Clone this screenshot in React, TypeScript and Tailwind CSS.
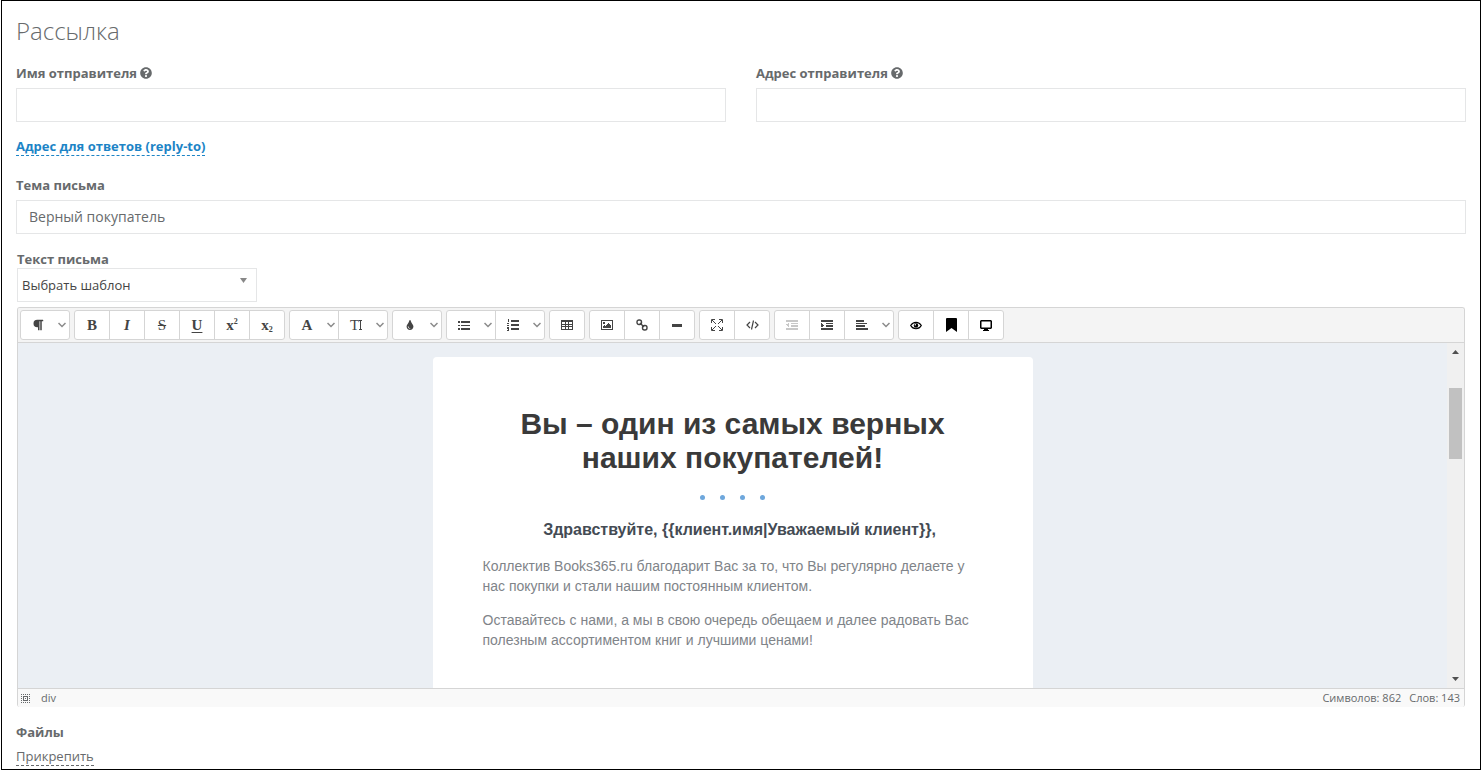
import type { ReactNode } from "react";
import { FaQuestionCircle, FaParagraph, FaTint } from "react-icons/fa";

type Tool = { label: string; icon: ReactNode; menu?: boolean; muted?: boolean };

function Icon({ w = 12, h = 12, children }: { w?: number; h?: number; children: ReactNode }) {
  return (
    <svg width={w} height={h} viewBox={`0 0 ${w} ${h}`} fill="currentColor" shapeRendering="crispEdges">
      {children}
    </svg>
  );
}

const glyph = "font-['Liberation_Serif',serif] text-[15px] leading-4";

const groups: Tool[][] = [
  [{ label: "Формат", icon: <FaParagraph size={12} />, menu: true }],
  [
    { label: "Полужирный", icon: <span className={`${glyph} font-bold`}>B</span> },
    { label: "Курсив", icon: <span className={`${glyph} font-bold italic`}>I</span> },
    { label: "Зачёркнутый", icon: <span className={`${glyph} line-through`}>S</span> },
    { label: "Подчёркнутый", icon: <span className={`${glyph} font-bold underline underline-offset-2`}>U</span> },
    {
      label: "Надстрочный",
      icon: (
        <span className={`${glyph} flex items-start font-bold`}>
          x<span className="text-[8px] leading-[10px]">2</span>
        </span>
      ),
    },
    {
      label: "Подстрочный",
      icon: (
        <span className={`${glyph} flex items-end font-bold`}>
          x<span className="text-[8px] leading-[6px]">2</span>
        </span>
      ),
    },
  ],
  [
    { label: "Шрифт", icon: <span className={`${glyph} font-bold`}>A</span>, menu: true },
    {
      label: "Размер шрифта",
      icon: (
        <span className="flex items-center">
          <span className={glyph}>T</span>
          <Icon w={3} h={10}>
            <path d="M1 0h1v10H1zM0 0h3v1H0zM0 9h3v1H0z" />
          </Icon>
        </span>
      ),
      menu: true,
    },
  ],
  [{ label: "Цвет", icon: <FaTint size={10} />, menu: true }],
  [
    {
      label: "Маркированный список",
      icon: (
        <Icon w={12} h={9}>
          <path d="M0 0h2v2H0zM0 4h2v1H0zM0 7h2v2H0zM3 0h9v2H3zM3 4h9v1H3zM3 7h9v2H3z" />
        </Icon>
      ),
      menu: true,
    },
    {
      label: "Нумерованный список",
      icon: (
        <Icon w={12} h={12}>
          <path d="M1 0h1v3H1zM0 4h2v1H1v1h1v1H0V6h1V5H0zM0 8h2v4H0v-1h1v-1H0zM4 1h8v2H4zM4 5h8v2H4zM4 9h8v2H4z" />
        </Icon>
      ),
      menu: true,
    },
  ],
  [
    {
      label: "Таблица",
      icon: (
        <Icon w={12} h={10}>
          <path fillRule="evenodd" d="M0 0h12v10H0zM1 2v2h3V2zM5 2v2h2V2zM8 2v2h3V2zM1 5v1h3V5zM5 5v1h2V5zM8 5v1h3V5zM1 7v2h3V7zM5 7v2h2V7zM8 7v2h3V7z" />
        </Icon>
      ),
    },
  ],
  [
    {
      label: "Изображение",
      icon: (
        <Icon w={12} h={10}>
          <path fillRule="evenodd" d="M0 0h12v10H0zM1 1v8h10V1z" />
          <path d="M2 2h2v2H2zM2 8V6h1V5h1v1h1V5h1V4h1V3h1v1h1v1h1v3z" />
        </Icon>
      ),
    },
    {
      label: "Ссылка",
      icon: (
        <svg width="12" height="12" viewBox="0 0 12 12" fill="none" stroke="currentColor" strokeWidth="1.4">
          <rect x="1" y="1" width="4.500" height="4.500" rx="2" />
          <rect x="6.500" y="6.500" width="4.500" height="4.500" rx="2" />
          <path d="M4 4l4 4" />
        </svg>
      ),
    },
    {
      label: "Линия",
      icon: (
        <Icon w={10} h={3}>
          <path d="M0 0h10v3H0z" />
        </Icon>
      ),
    },
  ],
  [
    {
      label: "На весь экран",
      icon: (
        <svg width="12" height="12" viewBox="0 0 12 12" fill="none" stroke="currentColor" strokeWidth="1">
          <path d="M.5 4V.5H4M8 .5h3.500V4M11.500 8v3.500H8M4 11.500H.5V8M1 1l4 4M11 1L7 5M11 11L7 7M1 11l4-4" />
        </svg>
      ),
    },
    {
      label: "HTML",
      icon: (
        <svg width="13" height="10" viewBox="0 0 13 10" fill="none" stroke="currentColor" strokeWidth="1.2">
          <path d="M4 2L1 5l3 3M9 2l3 3-3 3M7.500.5l-2 9" />
        </svg>
      ),
    },
  ],
  [
    {
      label: "Уменьшить отступ",
      icon: (
        <Icon w={12} h={10}>
          <path d="M0 0h12v2H0zM5 3h7v1H5zM5 5h7v2H5zM0 8h12v2H0zM3 3v4H2V6H1V5H0V4h2V3z" />
        </Icon>
      ),
      muted: true,
    },
    {
      label: "Увеличить отступ",
      icon: (
        <Icon w={12} h={10}>
          <path d="M0 0h12v2H0zM5 3h7v1H5zM5 5h7v2H5zM0 8h12v2H0zM0 3h1v1h1v1h1v1H2v1H0z" />
        </Icon>
      ),
    },
    {
      label: "Выравнивание",
      icon: (
        <Icon w={12} h={10}>
          <path d="M0 0h8v2H0zM0 3h11v1H0zM0 5h9v2H0zM0 8h12v2H0z" />
        </Icon>
      ),
      menu: true,
    },
  ],
  [
    {
      label: "Просмотр",
      icon: (
        <svg className="text-black" width="12" height="9" viewBox="0 0 12 9" fill="none" stroke="currentColor" strokeWidth="1.2">
          <path d="M.7 4.500C3 .2 9 .2 11.300 4.500 9 8.800 3 8.800.7 4.500z" />
          <circle cx="6" cy="4.500" r="2.200" fill="currentColor" stroke="none" />
          <circle cx="5.300" cy="3.700" r=".8" fill="#fff" stroke="none" />
        </svg>
      ),
    },
    {
      label: "Закладка",
      icon: (
        <svg className="text-black" width="11" height="14" viewBox="0 0 11 14" fill="currentColor">
          <path d="M1 0h9a1 1 0 0 1 1 1v13l-5.500-4L0 14V1a1 1 0 0 1 1-1z" />
        </svg>
      ),
    },
    {
      label: "Экран",
      icon: (
        <svg className="text-black" width="12" height="11" viewBox="0 0 12 11" fill="currentColor">
          <path fillRule="evenodd" d="M1 0h10l1 1v7l-1 1H8v1h1v1H3v-1h1V9H1L0 8V1zM1.500 1.500v6h9v-6z" />
        </svg>
      ),
    },
  ],
];

function ToolButton({ tool }: { tool: Tool }) {
  return (
    <button type="button" aria-label={tool.label} className="flex h-7 items-center hover:bg-gray-50">
      <span className={`flex w-[34px] justify-center ${tool.muted ? "text-[#c8c8c8]" : "text-[#444]"}`}>
        {tool.icon}
      </span>
      {tool.menu && (
        <svg className="mx-[3px] text-[#8a8a8a]" width="8" height="6" viewBox="0 0 8 6" fill="none" stroke="currentColor" strokeWidth="1.5">
          <path d="M.5 1L4 4.500 7.500 1" />
        </svg>
      )}
    </button>
  );
}

function Field({ id, label, help, value }: { id: string; label: string; help?: boolean; value?: string }) {
  return (
    <div>
      <label htmlFor={id} className="flex items-center gap-[3px] text-[13px] font-bold leading-5">
        {label}
        {help && <FaQuestionCircle size={12} />}
      </label>
      <input
        id={id}
        type="text"
        defaultValue={value}
        className="mt-[5px] block h-[34px] w-full border border-[#e5e6e7] bg-white px-3 pb-0.5 text-sm outline-none"
      />
    </div>
  );
}

function Scrollbar() {
  return (
    <div className="flex w-[17px] shrink-0 flex-col items-center bg-[#f0f0f0] text-[#505050]">
      <svg className="mt-[7px]" width="7" height="4" viewBox="0 0 7 4" fill="currentColor">
        <path d="M0 4L3.500 0 7 4z" />
      </svg>
      <div className="mt-[34px] h-[71px] w-[13px] bg-[#c1c1c1]" />
      <svg className="mb-[7px] mt-auto" width="7" height="4" viewBox="0 0 7 4" fill="currentColor">
        <path d="M0 0h7L3.500 4z" />
      </svg>
    </div>
  );
}

function Letter() {
  return (
    <div className="flex-1 bg-[#ebeff4] pt-[14px] font-['Liberation_Sans',Arial,sans-serif]">
      <div className="mx-auto h-[360px] max-w-[600px] rounded bg-white px-[50px] pt-[50px]">
        <h2 className="text-center text-[30px] font-bold leading-[34px] text-[#3a3a3a]">
          Вы – один из самых верных
          <br />
          наших покупателей!
        </h2>
        <div className="mt-5 flex justify-center gap-[15px]">
          {[0, 1, 2, 3].map((i) => (
            <span key={i} className="size-[5px] rounded-full bg-[#6ea7dc]" />
          ))}
        </div>
        <p className="mt-5 pl-[14px] text-center text-base font-bold leading-5 text-[#444b54]">
          Здравствуйте, {"{{клиент.имя|Уважаемый клиент}}"},
        </p>
        <p className="mt-4 text-sm leading-5 text-[#7f8489]">
          Коллектив Books365.ru благодарит Вас за то, что Вы регулярно делаете у нас покупки и стали нашим постоянным
          клиентом.
        </p>
        <p className="mt-[14px] text-sm leading-5 text-[#7f8489]">
          Оставайтесь с нами, а мы в свою очередь обещаем и далее радовать Вас полезным ассортиментом книг и лучшими
          ценами!
        </p>
      </div>
    </div>
  );
}

function Editor() {
  return (
    <div className="mx-px mt-[5px] overflow-hidden rounded-[3px] border border-b-0 border-[#d5d5d5]">
      <div className="flex flex-wrap gap-1 border-b border-[#d5d5d5] bg-[#f4f4f4] p-0.5">
        {groups.map((group) => (
          <div
            key={group[0].label}
            className="flex divide-x divide-[#d5d5d5] overflow-hidden rounded-[3px] border border-[#d5d5d5] bg-white"
          >
            {group.map((tool) => (
              <ToolButton key={tool.label} tool={tool} />
            ))}
          </div>
        ))}
      </div>
      <div className="flex h-[345px] overflow-hidden">
        <Letter />
        <Scrollbar />
      </div>
      <div className="flex items-center border-t border-[#d5d5d5] bg-[#f9f9f9] pl-[3px] pr-1 text-[11px] leading-[18px]">
        <Icon w={9} h={9}>
          <path d="M0 0h1v1H0zM2 0h1v1H2zM4 0h1v1H4zM6 0h1v1H6zM8 0h1v1H8zM0 2h1v1H0zM8 2h1v1H8zM0 4h1v1H0zM8 4h1v1H8zM0 6h1v1H0zM8 6h1v1H8zM0 8h1v1H0zM2 8h1v1H2zM4 8h1v1H4zM6 8h1v1H6zM8 8h1v1H8z" />
          <path fillRule="evenodd" d="M2 2h5v5H2zM3 3v3h3V3zM4 4h1v1H4z" />
        </Icon>
        <span className="ml-[11px]">div</span>
        <span className="ml-auto">Символов: 862</span>
        <span className="ml-2">Слов: 143</span>
      </div>
    </div>
  );
}

export default function App() {
  return (
    <main className="mx-px border border-black bg-white px-[14px] pb-[3px] pt-[14px] font-['Open_Sans',sans-serif] text-[13px] text-[#676a6c]">
      <h1 className="text-2xl font-light leading-8">Рассылка</h1>

      <div className="mt-4 grid grid-cols-2 gap-[30px]">
        <Field id="sender-name" label="Имя отправителя" help />
        <Field id="sender-address" label="Адрес отправителя" help />
      </div>

      <div className="mt-[15px] flex">
        <a href="#reply-to" className="border-b border-dashed border-[#1c84c6] font-bold leading-[18px] text-[#1c84c6]">
          Адрес для ответов (reply-to)
        </a>
      </div>

      <div className="mt-[19px]">
        <Field id="subject" label="Тема письма" value="Верный покупатель" />
      </div>

      <label htmlFor="template" className="ml-px mt-4 block font-bold leading-[18px]">
        Текст письма
      </label>
      <div className="relative ml-px w-60">
        <select
          id="template"
          className="block h-[34px] w-full appearance-none border border-[#e5e6e7] bg-white px-1 pt-0.5 text-[13px] text-[#444] outline-none"
        >
          <option>Выбрать шаблон</option>
        </select>
        <svg className="pointer-events-none absolute right-[10px] top-[10px] text-[#888]" width="7" height="5" viewBox="0 0 7 5" fill="currentColor">
          <path d="M0 0h7L3.500 5z" />
        </svg>
      </div>

      <Editor />

      <h3 className="mt-[15px] font-bold leading-5">Файлы</h3>
      <div className="mt-[5px] flex">
        <a href="#attach" className="border-b border-dashed border-[#676a6c] leading-[18px]">
          Прикрепить
        </a>
      </div>
    </main>
  );
}
